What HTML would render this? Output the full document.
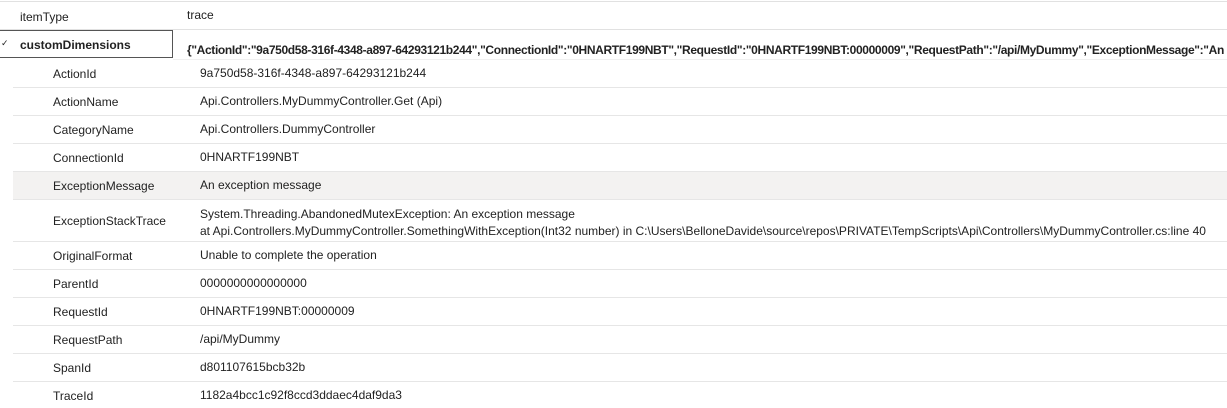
<!DOCTYPE html>
<html><head><style>
body{margin:0;width:1227px;height:408px;overflow:hidden;background:#fff;font-family:"Liberation Sans",sans-serif;font-size:12px;color:#222;position:relative}
.t{position:absolute;white-space:nowrap;line-height:14px}
.l{position:absolute;height:1px;background:#e6e6e6}
</style></head><body>
<div class="l" style="left:0;top:1px;width:1227px;background:#e1e1e1"></div>
<div class="t" style="left:20px;top:10px">itemType</div>
<div class="t" style="left:187px;top:8px">trace</div>
<div class="l" style="left:0;top:29px;width:1227px;background:#e1e1e1"></div>
<div style="position:absolute;left:-1px;top:30px;width:174px;height:28px;border:1px solid #555;box-sizing:border-box"></div>
<div class="t" style="left:1px;top:36px;font-size:9px">✓</div>
<div class="t" style="left:20px;top:38px;font-weight:bold">customDimensions</div>
<div style="position:absolute;left:187px;top:43px;width:1040px;height:16px;overflow:hidden"><div class="t" style="left:0;top:0;font-weight:bold;letter-spacing:-0.35px">{"ActionId":"9a750d58-316f-4348-a897-64293121b244","ConnectionId":"0HNARTF199NBT","RequestId":"0HNARTF199NBT:00000009","RequestPath":"/api/MyDummy","ExceptionMessage":"An exception message"}</div></div>
<div style="position:absolute;left:13px;top:171px;width:1214px;height:28px;background:#f3f2f1"></div>
<div class="l" style="left:173px;top:59px;width:1054px;background:#f0f0f0"></div>
<div class="l" style="left:13px;top:87px;width:1214px"></div>
<div class="l" style="left:13px;top:115px;width:1214px"></div>
<div class="l" style="left:13px;top:143px;width:1214px"></div>
<div class="l" style="left:13px;top:171px;width:1214px"></div>
<div class="l" style="left:13px;top:199px;width:1214px"></div>
<div class="l" style="left:13px;top:241px;width:1214px"></div>
<div class="l" style="left:13px;top:269px;width:1214px"></div>
<div class="l" style="left:13px;top:297px;width:1214px"></div>
<div class="l" style="left:13px;top:325px;width:1214px"></div>
<div class="l" style="left:13px;top:353px;width:1214px"></div>
<div class="l" style="left:13px;top:381px;width:1214px"></div>

<div class="t" style="left:53px;top:67px">ActionId</div><div class="t" style="left:200px;top:66px">9a750d58-316f-4348-a897-64293121b244</div>
<div class="t" style="left:53px;top:95px">ActionName</div><div class="t" style="left:200px;top:94px">Api.Controllers.MyDummyController.Get (Api)</div>
<div class="t" style="left:53px;top:123px">CategoryName</div><div class="t" style="left:200px;top:122px">Api.Controllers.DummyController</div>
<div class="t" style="left:53px;top:151px">ConnectionId</div><div class="t" style="left:200px;top:150px">0HNARTF199NBT</div>
<div class="t" style="left:53px;top:179px">ExceptionMessage</div><div class="t" style="left:200px;top:178px">An exception message</div>
<div class="t" style="left:53px;top:214px">ExceptionStackTrace</div>
<div class="t" style="left:200px;top:207px">System.Threading.AbandonedMutexException: An exception message</div>
<div class="t" style="left:200px;top:224px">at Api.Controllers.MyDummyController.SomethingWithException(Int32 number) in C:\Users\BelloneDavide\source\repos\PRIVATE\TempScripts\Api\Controllers\MyDummyController.cs:line 40</div>
<div class="t" style="left:53px;top:249px">OriginalFormat</div><div class="t" style="left:200px;top:248px">Unable to complete the operation</div>
<div class="t" style="left:53px;top:277px">ParentId</div><div class="t" style="left:200px;top:276px">0000000000000000</div>
<div class="t" style="left:53px;top:305px">RequestId</div><div class="t" style="left:200px;top:304px">0HNARTF199NBT:00000009</div>
<div class="t" style="left:53px;top:333px">RequestPath</div><div class="t" style="left:200px;top:332px">/api/MyDummy</div>
<div class="t" style="left:53px;top:361px">SpanId</div><div class="t" style="left:200px;top:360px">d801107615bcb32b</div>
<div class="t" style="left:53px;top:389px">TraceId</div><div class="t" style="left:200px;top:388px">1182a4bcc1c92f8ccd3ddaec4daf9da3</div>
</body></html>
